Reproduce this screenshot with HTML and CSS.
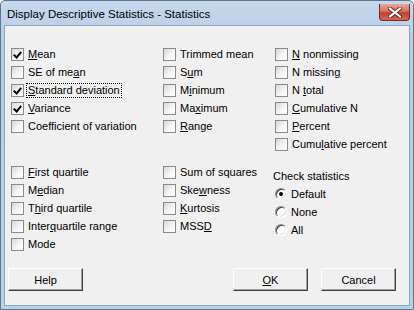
FILE: index.html
```html
<!DOCTYPE html>
<html lang="en">
<head>
    <meta charset="UTF-8">
    <title>Display Descriptive Statistics - Statistics</title>
    <link rel="stylesheet" href="styles.css">
</head>
<body>

<div class="window">
    <div class="titlebar">
        <span class="title">Display Descriptive Statistics - Statistics</span>
        <div class="close">
            <svg width="14" height="11" viewBox="0 0 14 11">
                <path d="M2 1.5 L12 9.5 M12 1.5 L2 9.5" stroke="#5b2a22" stroke-width="4" stroke-linecap="square"/>
                <path d="M2 1.5 L12 9.5 M12 1.5 L2 9.5" stroke="#ffffff" stroke-width="2.2" stroke-linecap="square"/>
            </svg>
        </div>
    </div>

    <div class="client">
        <div class="group">
            <div class="col col1">
                <label class="row"><span class="box on"></span><span><u>M</u>ean</span></label>
                <label class="row"><span class="box"></span><span>SE of me<u>a</u>n</span></label>
                <label class="row"><span class="box on"></span><span class="focus"><u>S</u>tandard deviation</span></label>
                <label class="row"><span class="box on"></span><span><u>V</u>ariance</span></label>
                <label class="row"><span class="box"></span><span>Coefficient of variation</span></label>
            </div>
            <div class="col col2">
                <label class="row"><span class="box"></span><span>Trimmed mean</span></label>
                <label class="row"><span class="box"></span><span>S<u>u</u>m</span></label>
                <label class="row"><span class="box"></span><span>M<u>i</u>nimum</span></label>
                <label class="row"><span class="box"></span><span>Ma<u>x</u>imum</span></label>
                <label class="row"><span class="box"></span><span><u>R</u>ange</span></label>
            </div>
            <div class="col col3">
                <label class="row"><span class="box"></span><span><u>N</u> nonmissing</span></label>
                <label class="row"><span class="box"></span><span>N missin<u>g</u></span></label>
                <label class="row"><span class="box"></span><span>N <u>t</u>otal</span></label>
                <label class="row"><span class="box"></span><span><u>C</u>umulative N</span></label>
                <label class="row"><span class="box"></span><span><u>P</u>ercent</span></label>
                <label class="row"><span class="box"></span><span>Cumu<u>l</u>ative percent</span></label>
            </div>
        </div>

        <div class="group second">
            <div class="col col1">
                <label class="row"><span class="box"></span><span><u>F</u>irst quartile</span></label>
                <label class="row"><span class="box"></span><span>M<u>e</u>dian</span></label>
                <label class="row"><span class="box"></span><span>T<u>h</u>ird quartile</span></label>
                <label class="row"><span class="box"></span><span>Inter<u>q</u>uartile range</span></label>
                <label class="row"><span class="box"></span><span>Mode</span></label>
            </div>
            <div class="col col2">
                <label class="row"><span class="box"></span><span>Sum of squares</span></label>
                <label class="row"><span class="box"></span><span>Ske<u>w</u>ness</span></label>
                <label class="row"><span class="box"></span><span><u>K</u>urtosis</span></label>
                <label class="row"><span class="box"></span><span>MSS<u>D</u></span></label>
            </div>
            <div class="col col3 checks">
                <div class="caption">Check statistics</div>
                <label class="row"><span class="radio on"></span><span>Default</span></label>
                <label class="row"><span class="radio"></span><span>None</span></label>
                <label class="row"><span class="radio"></span><span>All</span></label>
            </div>
        </div>

        <div class="buttons">
            <button class="btn">Help</button>
            <span class="spacer"></span>
            <button class="btn"><u>O</u>K</button>
            <button class="btn">Cancel</button>
        </div>
    </div>
</div>

</body>
</html>
```

FILE: styles.css
```css
body {
    margin: 0;
    background-color: #ffffff;
    font-family: "Liberation Sans", Arial, sans-serif;
}

.window {
    width: 414px;
    height: 310px;
    box-sizing: border-box;
    border: 1px solid #5f7690;
    border-radius: 5px 5px 0 0;
    background: linear-gradient(to bottom, #c6d8ed, #b6cde8 40px, #b9d0ea);
    padding: 0 3px 3px 3px;
    display: flex;
    flex-direction: column;
}

.titlebar {
    height: 24px;
    display: flex;
    align-items: flex-start;
    justify-content: space-between;
}

.title {
    font-size: 11.5px;
    color: #000;
    margin: 7px 0 0 3px;
}

.close {
    width: 31px;
    height: 17px;
    margin-top: 3px;
    box-sizing: border-box;
    border: 1px solid #6e2b20;
    border-top: none;
    border-radius: 0 0 4px 4px;
    background: linear-gradient(to bottom, #e9a897, #d7715a 45%, #c3432b 55%, #d2664c);
    display: flex;
    align-items: center;
    justify-content: center;
}

.client {
    flex: 1;
    background-color: #f0f0f0;
    border: 1px solid #8ea6c0;
    font-size: 11px;
    color: #000;
    padding: 19px 0 0 0;
    display: flex;
    flex-direction: column;
}

.group {
    display: flex;
    padding-left: 6px;
    height: 108px;
}

.group.second {
    margin-top: 10px;
    height: 90px;
}

.col1 {
    width: 152px;
}

.col2 {
    width: 112px;
}

.row {
    height: 18px;
    display: flex;
    align-items: center;
    gap: 4px;
    white-space: nowrap;
}

.box {
    width: 13px;
    height: 13px;
    box-sizing: border-box;
    border: 1px solid #8a8a8a;
    background: linear-gradient(135deg, #d8d8d8, #f4f4f4 55%, #ffffff);
    position: relative;
    flex-shrink: 0;
}

/* check mark */
.box.on::after {
    content: "";
    position: absolute;
    left: 3px;
    top: 1px;
    width: 3px;
    height: 6px;
    border-right: 2px solid #000;
    border-bottom: 2px solid #000;
    transform: rotate(40deg);
}

.focus {
    border: 1px dotted #000;
    padding: 0 1px;
    margin-left: -2px;
    line-height: 13px;
}

.checks {
    padding-top: 4px;
}

.caption {
    height: 18px;
    line-height: 18px;
    margin-left: -2px;
}

.radio {
    width: 12px;
    height: 12px;
    border-radius: 50%;
    box-sizing: border-box;
    background: #ffffff;
    border: 1px solid;
    border-color: #8a8a8a #ffffff #ffffff #8a8a8a;
    box-shadow: inset 1px 1px 0 #404040, inset -1px -1px 0 #e0e0e0;
    position: relative;
    flex-shrink: 0;
}

.radio.on::after {
    content: "";
    position: absolute;
    left: 3px;
    top: 3px;
    width: 4px;
    height: 4px;
    border-radius: 50%;
    background: #000;
}

.buttons {
    display: flex;
    gap: 13px;
    margin-top: 15px;
    padding: 0 13px 0 3px;
}

.spacer {
    flex: 1;
}

.btn {
    width: 75px;
    height: 23px;
    font-family: "Liberation Sans", Arial, sans-serif;
    font-size: 11px;
    color: #000;
    background-color: #f0f0f0;
    border: 1px solid;
    border-color: #ffffff #404040 #404040 #ffffff;
    box-shadow: inset -1px -1px 0 #a0a0a0;
    padding: 0;
}
```
